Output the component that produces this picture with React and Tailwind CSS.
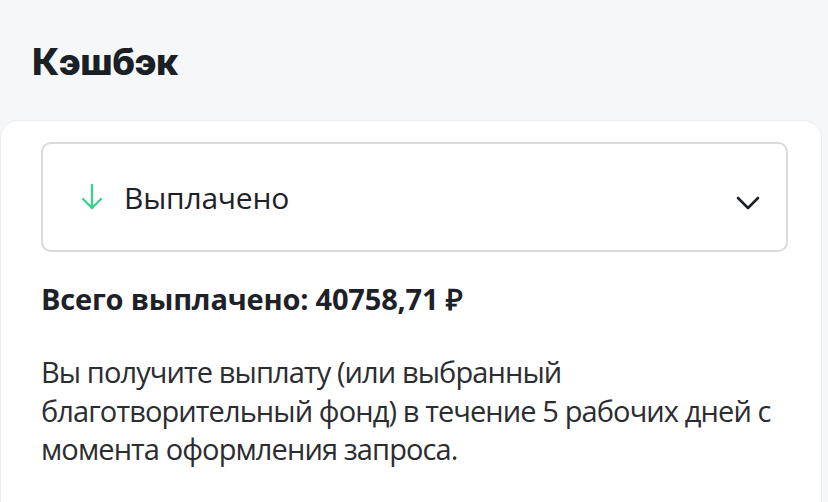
function ArrowDownIcon() {
  return (
    <svg width="22" height="28" viewBox="0 0 22 28" fill="none" stroke="#3fd08f" strokeWidth="2.4" strokeLinecap="round" strokeLinejoin="round">
      <path d="M11 2v23" />
      <path d="M2 16l9 9 9-9" />
    </svg>
  );
}

function Chevron() {
  return (
    <svg width="24" height="15" viewBox="0 0 24 15" fill="none" stroke="#1e2128" strokeWidth="2.6" strokeLinecap="round" strokeLinejoin="round" className="mt-[12px]">
      <path d="M2 2l10 10 10-10" />
    </svg>
  );
}

export default function App() {
  return (
    <div className="min-h-[502px] w-[828px] bg-[#f5f7f9] overflow-hidden">
      <header className="px-8 pt-[37px] pb-[33px]">
        <h1 className="text-[37px] leading-[50px] font-extrabold tracking-[-0.5px] text-[#1b1f26] [font-family:Inter,sans-serif]">
          Кэшбэк
        </h1>
      </header>

      <section className="mr-[6px] rounded-t-[18px] border border-[#eaecef] bg-white pl-10 pr-[33px] pt-[21px] pb-10 [font-family:'Open_Sans',sans-serif]">
        <button className="flex h-[110px] w-full items-center rounded-[10px] border-2 border-[#dadada] pl-[38px] pr-[26px] text-left">
          <ArrowDownIcon />
          <span className="ml-[21px] flex-1 text-[30px] tracking-[-0.2px] text-[#1e2128]">Выплачено</span>
          <Chevron />
        </button>

        <p className="mt-[27px] text-[29px] leading-[40px] font-bold tracking-[-0.2px] text-[#1e2128]">
          Всего выплачено: 40758,71 ₽
        </p>

        <p className="mt-[34px] text-[29px] leading-[38.5px] tracking-[-0.9px] text-[#2b2d31]">
          Вы получите выплату (или выбранный благотворительный фонд) в течение 5 рабочих дней с момента оформления запроса.
        </p>
      </section>
    </div>
  );
}
